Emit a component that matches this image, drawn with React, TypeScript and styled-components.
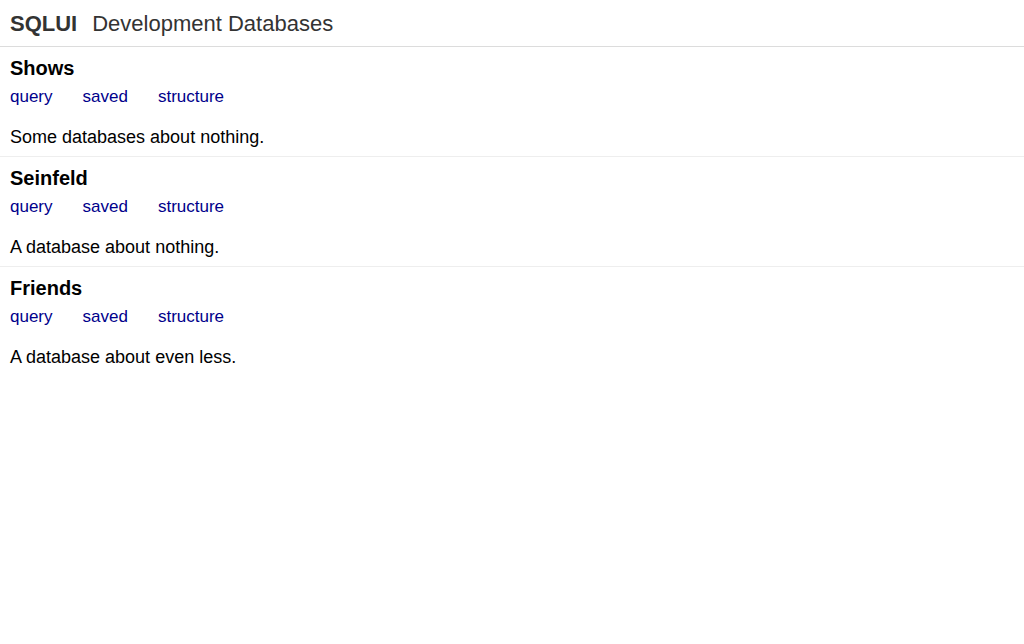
import React from "react";
import styled, { createGlobalStyle } from "styled-components";

const Global = createGlobalStyle`
  html, body { margin: 0; padding: 0; background: #fff; }
  body { font-family: "Liberation Sans", Arial, Helvetica, sans-serif; color: #000; }
`;

const Header = styled.header`
  display: flex;
  align-items: center;
  gap: 15px;
  height: 47px;
  padding: 1px 10px 0;
  border-bottom: 1px solid #dcdcdc;
  box-sizing: border-box;
  color: #333;
  font-size: 22px;
`;

const Brand = styled.span`
  font-weight: bold;
`;

const Section = styled.section<{ $last?: boolean }>`
  padding: 8px 10px 0;
  height: 110px;
  box-sizing: border-box;
  border-bottom: ${(p) => (p.$last ? "none" : "1px solid #eee")};
`;

const Title = styled.h2`
  margin: 0;
  font-size: 20px;
  font-weight: bold;
  line-height: 26px;
`;

const Links = styled.nav`
  display: flex;
  gap: 30px;
  margin-top: 6px;
`;

const LinkItem = styled.a`
  color: #00008b;
  text-decoration: none;
  font-size: 17px;
  line-height: 20px;
`;

const Desc = styled.p`
  margin: 20px 0 0;
  font-size: 18px;
  line-height: 20px;
`;

const dbs = [
  { name: "Shows", desc: "Some databases about nothing." },
  { name: "Seinfeld", desc: "A database about nothing." },
  { name: "Friends", desc: "A database about even less." },
];

export default function App() {
  return (
    <>
      <Global />
      <Header>
        <Brand>SQLUI</Brand>
        <span>Development Databases</span>
      </Header>
      {dbs.map((d, i) => (
        <Section key={d.name} $last={i === dbs.length - 1}>
          <Title>{d.name}</Title>
          <Links>
            <LinkItem href="#">query</LinkItem>
            <LinkItem href="#">saved</LinkItem>
            <LinkItem href="#">structure</LinkItem>
          </Links>
          <Desc>{d.desc}</Desc>
        </Section>
      ))}
    </>
  );
}
